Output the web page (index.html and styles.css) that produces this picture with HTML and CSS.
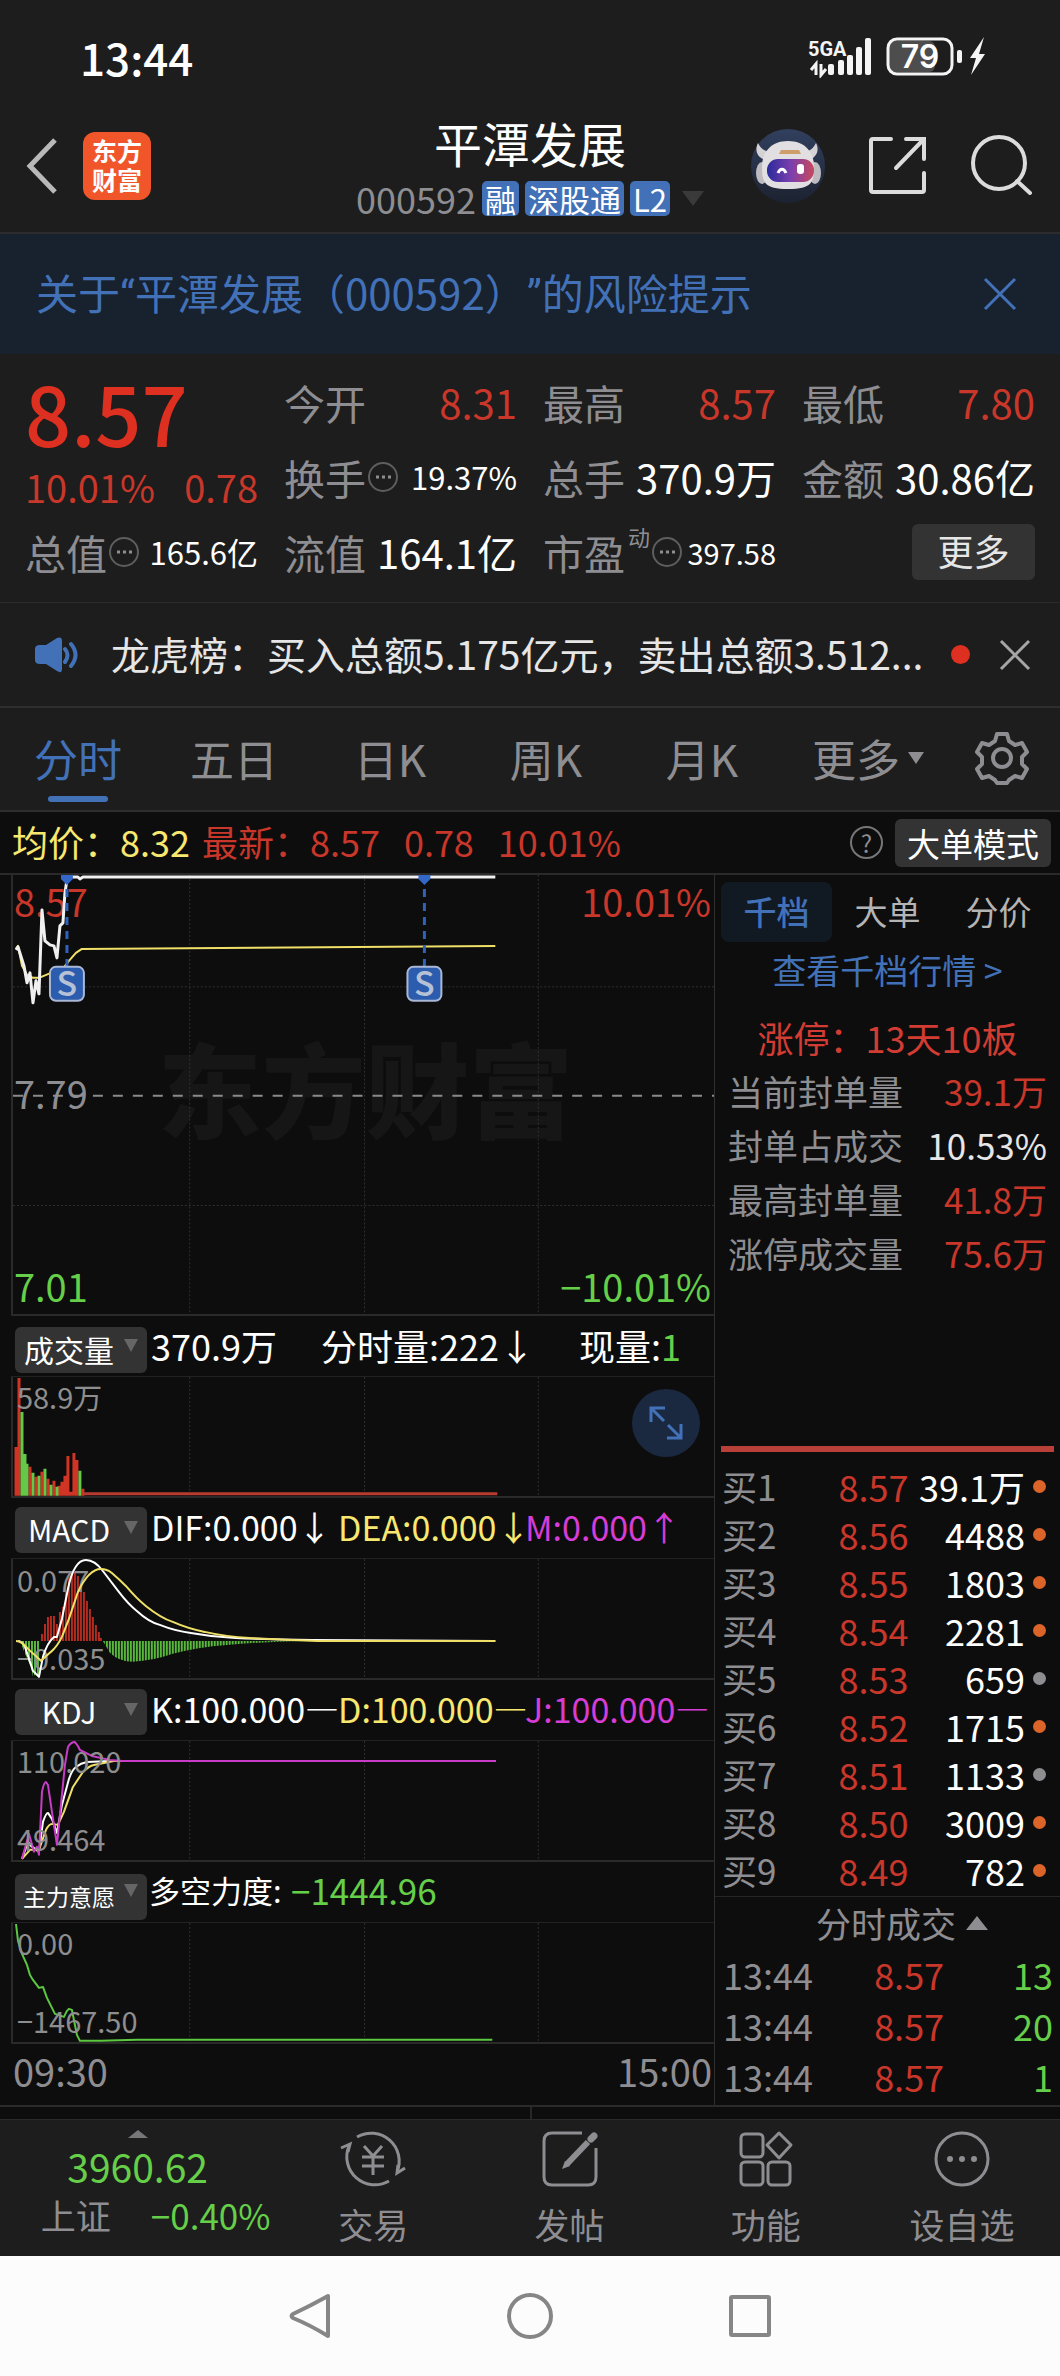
FILE: index.html
```html
<!DOCTYPE html>
<html lang="zh-CN">
<head>
    <meta charset="UTF-8">
    <meta name="viewport" content="width=device-width, initial-scale=1">
    <title>平潭发展 000592</title>
    <link rel="stylesheet" href="styles.css">
</head>
<body>
    <div class="status-bar">
        <span class="clock">13:44</span>
        <svg class="status-icons" viewBox="0 0 180 42" width="180" height="42">
            <text x="0" y="20" class="net-type">5GA</text>
            <path d="M3 34l5-6v11M13 28v11l5-6" fill="none" stroke="#f4f4f4" stroke-width="3"/>
            <g fill="#f4f4f4">
                <rect x="20" y="28" width="6" height="11" rx="2"/>
                <rect x="30" y="24" width="6" height="15" rx="2"/>
                <rect x="39" y="19" width="6" height="20" rx="2"/>
                <rect x="48" y="11" width="6" height="28" rx="2"/>
                <rect x="57" y="2" width="6" height="37" rx="2"/>
                <rect x="149" y="14" width="5" height="13" rx="2"/>
                <path d="M176 1l-14 21h6l-5 17 14-21h-6z"/>
            </g>
            <rect x="81" y="5" width="46" height="31" rx="6" fill="#4d4d4d"/>
            <rect x="80" y="3" width="64" height="35" rx="9" fill="none" stroke="#f4f4f4" stroke-width="3"/>
            <text x="112" y="32" class="battery">79</text>
        </svg>
    </div>

    <header class="header">
        <div class="header-left">
            <button class="icon-btn" aria-label="返回">
                <svg viewBox="0 0 34 58" width="34" height="58"><path d="M30 3L5 29l25 26" fill="none" stroke="#b9b9b9" stroke-width="5"/></svg>
            </button>
            <a href="#" class="logo"><span>东方</span><span>财富</span></a>
        </div>
        <div class="header-title">
            <h1>平潭发展</h1>
            <div class="code-row">
                <span class="code">000592</span>
                <span class="tag">融</span>
                <span class="tag">深股通</span>
                <span class="tag">L2</span>
                <span class="caret-down"></span>
            </div>
        </div>
        <div class="header-right">
            <button class="icon-btn" aria-label="智能助手">
                <svg viewBox="0 0 76 76" width="76" height="76">
                    <defs>
                        <linearGradient id="sky" x1="0" y1="0" x2="0" y2="1"><stop offset="0" stop-color="#31405f"/><stop offset="1" stop-color="#1c2230"/></linearGradient>
                        <linearGradient id="visor" x1="0" y1="0" x2="1" y2="0"><stop offset="0" stop-color="#2a2a9c"/><stop offset=".5" stop-color="#7a3fae"/><stop offset="1" stop-color="#c8485c"/></linearGradient>
                    </defs>
                    <circle cx="38" cy="38" r="37" fill="url(#sky)"/>
                    <path d="M8 15c-4 8 0 15 8 17l6-8c-7 0-11-3-14-9zM66 15c4 8 0 15-8 17l-6-8c7 0 11-3 14-9z" fill="#d5d2d6"/>
                    <ellipse cx="12" cy="45" rx="6" ry="11" fill="#bdbac0"/>
                    <ellipse cx="65" cy="45" rx="6" ry="11" fill="#bdbac0"/>
                    <path d="M38 13c17 0 26 11 26 26s-2 22-26 22-26-7-26-22 9-26 26-26z" fill="#e2dfe2"/>
                    <path d="M31 22h18l2 4H29z" fill="#cf9d6a"/>
                    <rect x="17" y="31" width="47" height="23" rx="11" fill="url(#visor)"/>
                    <path d="M28 45c2-5 6-5 8 0" fill="none" stroke="#fff" stroke-width="3"/>
                    <rect x="47" y="36" width="7" height="10" rx="3" fill="#fff"/>
                </svg>
            </button>
            <button class="icon-btn" aria-label="分享">
                <svg viewBox="0 0 60 60" width="60" height="60"><path d="M23 3H5Q3 3 3 5v49q0 2 2 2h49q2 0 2-2V37M38 3h18v20M56 3L28 32" fill="none" stroke="#dcdcdc" stroke-width="4" stroke-linecap="round"/></svg>
            </button>
            <button class="icon-btn" aria-label="搜索">
                <svg viewBox="0 0 62 62" width="62" height="62"><circle cx="29" cy="28" r="26" fill="none" stroke="#dcdcdc" stroke-width="4"/><path d="M47 46l13 12" stroke="#dcdcdc" stroke-width="4" stroke-linecap="round"/></svg>
            </button>
        </div>
    </header>

    <div class="notice">
        <a href="#"><span>关于</span><span class="quote-mark">“</span><span>平潭发展（000592）</span><span class="quote-mark">”</span><span>的风险提示</span></a>
        <button class="icon-btn" aria-label="关闭提示">
            <svg viewBox="0 0 34 34" width="34" height="34"><path d="M2 2l30 30M32 2L2 32" stroke="#4271b8" stroke-width="3"/></svg>
        </button>
    </div>

    <section class="quote">
        <div class="price-block">
            <div class="price">8.57</div>
            <div class="change"><span>10.01%</span><span>0.78</span></div>
        </div>
        <div class="cell"><span class="name">今开</span><span class="red">8.31</span></div>
        <div class="cell"><span class="name">最高</span><span class="red">8.57</span></div>
        <div class="cell"><span class="name">最低</span><span class="red">7.80</span></div>
        <div class="cell"><span class="name">换手<svg class="more-dot" viewBox="0 0 30 30"><use href="#dots"/></svg></span><span class="small">19.37%</span></div>
        <div class="cell"><span class="name">总手</span><span>370.9万</span></div>
        <div class="cell"><span class="name">金额</span><span>30.86亿</span></div>
        <div class="cell"><span class="name">总值<svg class="more-dot" viewBox="0 0 30 30"><use href="#dots"/></svg></span><span class="small">165.6亿</span></div>
        <div class="cell"><span class="name">流值</span><span>164.1亿</span></div>
        <div class="cell"><span class="name">市盈<sup>动</sup><svg class="more-dot" viewBox="0 0 30 30"><g id="dots"><circle cx="15" cy="15" r="14" fill="none" stroke="#5e5e5e" stroke-width="2"/><path d="M8 15h3M14 15h3M20 15h3" stroke="#8e8e92" stroke-width="3"/></g></svg></span><span class="smaller">397.58</span></div>
        <div class="cell cell-end"><button class="more-btn">更多</button></div>
    </section>

    <div class="news">
        <svg viewBox="0 0 46 38" width="46" height="38"><path d="M2 13q0-4 5-4h6L24 2q5-2 5 3v28q0 5-5 2l-11-7H7q-5 0-5-4z" fill="#4271b8"/><path d="M32 13q5 6 0 13M38 8q9 11 0 22" fill="none" stroke="#4271b8" stroke-width="4" stroke-linecap="round"/></svg>
        <a href="#">龙虎榜：买入总额5.175亿元，卖出总额3.512...</a>
        <span class="unread"></span>
        <button class="icon-btn" aria-label="关闭消息">
            <svg viewBox="0 0 32 32" width="32" height="32"><path d="M2 2l28 28M30 2L2 30" stroke="#a6a6a6" stroke-width="3"/></svg>
        </button>
    </div>

    <nav class="period-tabs">
        <button class="active">分时</button>
        <button>五日</button>
        <button>日K</button>
        <button>周K</button>
        <button>月K</button>
        <button>更多<span class="caret-down caret-small"></span></button>
        <button class="settings" aria-label="设置">
            <svg viewBox="0 0 54 54" width="54" height="54" fill="none" stroke="#8e8e92" stroke-width="4" stroke-linejoin="round"><path d="M22 3h10l2 7 6 4 7-2 5 9-5 5v7l5 5-5 9-7-2-6 4-2 3H22l-2-3-6-4-7 2-5-9 5-5v-7l-5-5 5-9 7 2 6-4z"/><circle cx="27" cy="27" r="9"/></svg>
        </button>
    </nav>

    <div class="info-row">
        <span class="yellow">均价：8.32</span>
        <span class="red latest"><span>最新：8.57</span><span>0.78</span><span>10.01%</span></span>
        <button class="help" aria-label="帮助">?</button>
        <button class="mode-btn">大单模式</button>
    </div>

    <main class="board">
        <div class="charts">
            <svg class="chart" viewBox="0 0 702 440">
                <text x="353" y="256" class="watermark">东方财富</text>
                <g class="dotted">
                    <path d="M0 112H702M0 331H702"/>
                    <path d="M177 0V440M352 0V440M526 0V440"/>
                </g>
                <path d="M0 221H702" stroke="#8a8a8a" stroke-width="2" stroke-dasharray="10 10"/>
                <text x="1" y="42" class="axis red-fill">8.57</text>
                <text x="699" y="42" class="axis red-fill end">10.01%</text>
                <text x="1" y="234" class="axis">7.79</text>
                <text x="1" y="428" class="axis green-fill">7.01</text>
                <text x="699" y="428" class="axis green-fill end">−10.01%</text>
                <path class="line yellow-line" d="M3 74L5 71L9 91L14 100L20 103L26 103L38 98L49 95L56 86L63 78L69 74L483 71"/>
                <path class="line price-line" d="M3 75L5 72L11 91L14 108L17 98L20 128L23 106L26 119L29 35L32 66L37 70L41 71L44 83L47 51L50 48L52 18L54 5L58 2H65L67 4L70 2H483"/>
                <g class="sell">
                    <path d="M48 0h12v4l-6 6-6-6zM406 0h12v4l-6 6-6-6z" fill="#3468c8"/>
                    <path d="M54 14V92M412 14V92" stroke="#2f62ba" stroke-width="3" stroke-dasharray="8 6"/>
                    <rect x="37" y="92" width="34" height="34" rx="6"/>
                    <rect x="395" y="92" width="34" height="34" rx="6"/>
                    <text x="54" y="121">S</text>
                    <text x="412" y="121">S</text>
                </g>
            </svg>

            <div class="indicator-bar volume-bar">
                <span class="picker"><select aria-label="副图指标一"><option>成交量</option></select></span>
                <span>370.9万</span>
                <span>分时量:222↓</span>
                <span>现量:<span class="green">1</span></span>
            </div>
            <div class="sub-chart">
                <svg class="chart" viewBox="0 0 702 119">
                    <path class="dotted" d="M177 0V119M352 0V119M526 0V119"/>
                    <g stroke-width="3">
                        <path stroke="#cf3424" d="M3 119V70M6 119V1M17 119V90M23 119V100M29 119V95M35 119V102M41 119V104M46 119V109M49 119V105M52 119V99M55 119V79M58 119V115M61 119V76M64 119V83M70 119V112"/>
                        <path stroke="#66c848" d="M9 119V35M12 119V77M14 119V87M20 119V96M26 119V99M32 119V92M38 119V108M44 119V110M67 119V94"/>
                    </g>
                    <path d="M70 117H485" stroke="#b83a30" stroke-width="3"/>
                    <text x="4" y="32" class="scale">58.9万</text>
                </svg>
                <button class="expand" aria-label="全屏">
                    <svg viewBox="0 0 36 36" width="36" height="36" fill="none" stroke="#4271b8" stroke-width="3"><path d="M3 17V3h14M3 3l13 13M33 19v14H19M33 33L20 20"/></svg>
                </button>
            </div>

            <div class="indicator-bar">
                <span class="picker"><select aria-label="副图指标二"><option>MACD</option></select></span>
                <span>DIF:0.000↓</span>
                <span class="yellow">DEA:0.000↓</span>
                <span class="purple">M:0.000↑</span>
            </div>
            <svg class="chart" viewBox="0 0 702 119">
                <defs>
                    <pattern id="stripes" width="3" height="119" patternUnits="userSpaceOnUse"><rect width="2" height="119" fill="#58b83c"/></pattern>
                </defs>
                <path class="dotted" d="M177 0V119M352 0V119M526 0V119"/>
                <path stroke="#b42c20" stroke-width="2" d="M29 82V75M32 82V65M35 82V58M38 82V57M41 82V57M44 82V65M47 82V53M50 82V48M53 82V33M56 82V15M59 82V13M62 82V13M65 82V17M68 82V25M71 82V33M74 82V42M77 82V50M80 82V58M83 82V66M86 82V73M88 82V79"/>
                <path fill="url(#stripes)" d="M7 82L12 95L18 108L20 118L23 115L27 117V82z"/>
                <path fill="url(#stripes)" d="M90 82L97 94Q106 103 120 103Q140 102 160 95Q185 88 214 86Q250 83 290 82z"/>
                <text x="4" y="33" class="scale">0.077</text>
                <text x="4" y="111" class="scale">−0.035</text>
                <path class="line white-line" d="M5 82Q9 82 12 88L20 112L26 118L30 98Q34 84 41 78L44 78L49 60L55 30Q61 1 73 1Q82 1 90 12L106 33Q116 46 124 52Q136 63 147 66Q162 72 178 74Q200 78 223 79Q260 81 300 81L483 82"/>
                <path class="line yellow-line" d="M3 82Q9 82 15 90L28 102L38 93Q44 88 49 78L56 60L65 33Q76 10 88 10Q94 10 99 14Q106 20 113 27Q124 40 133 47Q148 59 160 63Q176 70 192 73Q214 78 237 79Q270 81 305 82H483"/>
            </svg>

            <div class="indicator-bar">
                <span class="picker"><select aria-label="副图指标三"><option>KDJ</option></select></span>
                <span>K:100.000—</span>
                <span class="yellow">D:100.000—</span>
                <span class="purple">J:100.000—</span>
            </div>
            <svg class="chart" viewBox="0 0 702 119">
                <path class="dotted" d="M177 0V119M352 0V119M526 0V119"/>
                <path class="line white-line" d="M9 118L15 101L18 105L26 111L30 81Q33 72 35 72L39 78L44 92L49 64L56 38Q59 29 63 26Q68 22 74 21L97 20H483"/>
                <path class="line yellow-line" d="M9 118L17 109H26L33 89Q36 83 39 83L45 84L51 71L60 46L70 31Q76 25 81 24L101 20H483"/>
                <path class="line purple-line" d="M9 118L16 93L21 111L24 106L26 114L29 51Q31 41 33 41L35 44L39 71L44 104L47 74L52 24L55 6Q58 1 62 1L65 5L67 9L79 15L97 19L110 20H483"/>
                <text x="4" y="32" class="scale">110.020</text>
                <text x="4" y="110" class="scale">49.464</text>
            </svg>

            <div class="indicator-bar force-bar">
                <span class="picker"><select class="long" aria-label="副图指标四"><option>主力意愿</option></select></span>
                <span class="force">多空力度:</span>
                <span class="green">−1444.96</span>
            </div>
            <svg class="chart" viewBox="0 0 702 119">
                <path class="dotted" d="M177 0V119M352 0V119M526 0V119"/>
                <path class="line green-line" d="M3 1L5 18L9 31L14 42L17 52L20 57L26 65L30 64L34 75L42 91L51 94L54 88L56 86L59 87L64 112L67 118H88L124 117H480"/>
                <text x="4" y="32" class="scale">0.00</text>
                <text x="4" y="110" class="scale">−1467.50</text>
            </svg>
            <div class="time-axis"><span>09:30</span><span>15:00</span></div>
        </div>

        <aside class="side">
            <div class="side-tabs">
                <button class="active">千档</button>
                <button>大单</button>
                <button>分价</button>
            </div>
            <a href="#" class="depth-link">查看千档行情 &gt;</a>
            <div class="limit">
                <div class="limit-title">涨停：13天10板</div>
                <div class="limit-row"><span>当前封单量</span><span class="red">39.1万</span></div>
                <div class="limit-row"><span>封单占成交</span><span class="white">10.53%</span></div>
                <div class="limit-row"><span>最高封单量</span><span class="red">41.8万</span></div>
                <div class="limit-row"><span>涨停成交量</span><span class="red">75.6万</span></div>
            </div>
            <table class="book">
                <tr><th>买1</th><td class="red">8.57</td><td>39.1万</td><td><i class="dot"></i></td></tr>
                <tr><th>买2</th><td class="red">8.56</td><td>4488</td><td><i class="dot"></i></td></tr>
                <tr><th>买3</th><td class="red">8.55</td><td>1803</td><td><i class="dot"></i></td></tr>
                <tr><th>买4</th><td class="red">8.54</td><td>2281</td><td><i class="dot"></i></td></tr>
                <tr><th>买5</th><td class="red">8.53</td><td>659</td><td><i class="dot gray"></i></td></tr>
                <tr><th>买6</th><td class="red">8.52</td><td>1715</td><td><i class="dot"></i></td></tr>
                <tr><th>买7</th><td class="red">8.51</td><td>1133</td><td><i class="dot gray"></i></td></tr>
                <tr><th>买8</th><td class="red">8.50</td><td>3009</td><td><i class="dot"></i></td></tr>
                <tr><th>买9</th><td class="red">8.49</td><td>782</td><td><i class="dot"></i></td></tr>
            </table>
            <div class="ticks">
                <button class="ticks-title">分时成交<span class="caret-up"></span></button>
                <table>
                    <tr><th>13:44</th><td class="red">8.57</td><td class="green">13</td></tr>
                    <tr><th>13:44</th><td class="red">8.57</td><td class="green">20</td></tr>
                    <tr><th>13:44</th><td class="red">8.57</td><td class="green">1</td></tr>
                </table>
            </div>
        </aside>
    </main>

    <div class="next-section"><div></div><div></div></div>

    <footer class="toolbar">
        <a href="#" class="index">
            <span class="caret-up caret-small"></span>
            <span class="green index-value">3960.62</span>
            <span class="index-row"><span>上证</span><span class="green">−0.40%</span></span>
        </a>
        <button>
            <svg viewBox="0 0 68 60" width="68" height="60" fill="none" stroke="#8e8e92" stroke-width="3"><path d="M18 8A28 28 0 0 1 58 43M66 39l-8 5 1-8M50 52A28 28 0 0 1 10 17M2 19l9-4-2 8"/><path d="M25 17l9 10 9-10M23 28h22M23 37h22M34 27v19"/></svg>
            交易
        </button>
        <button>
            <svg viewBox="0 0 60 60" width="60" height="60" fill="none" stroke="#8e8e92" stroke-width="3"><path d="M42 4H12q-8 0-8 8v36q0 8 8 8h36q8 0 8-8V19"/><path d="M27 35l21-22" stroke-width="6"/><path d="M51 10l3-3" stroke-width="7" stroke-linecap="round"/><path d="M22 40l3-8 5 5z" fill="#8e8e92" stroke="none"/></svg>
            发帖
        </button>
        <button>
            <svg viewBox="0 0 60 60" width="60" height="60" fill="none" stroke="#8e8e92" stroke-width="3" stroke-linejoin="round"><rect x="5" y="5" width="22" height="23" rx="4"/><rect x="5" y="33" width="22" height="23" rx="4"/><rect x="32" y="33" width="22" height="23" rx="4"/><path d="M43 4l12 12-12 13-12-13z"/></svg>
            功能
        </button>
        <button>
            <svg viewBox="0 0 60 60" width="60" height="60"><circle cx="30" cy="30" r="26" fill="none" stroke="#8e8e92" stroke-width="3"/><g fill="#8e8e92"><circle cx="18" cy="30" r="3"/><circle cx="30" cy="30" r="3"/><circle cx="42" cy="30" r="3"/></g></svg>
            设自选
        </button>
    </footer>

    <nav class="system-nav">
        <button aria-label="返回"><svg viewBox="0 0 48 48" width="48" height="48"><path d="M42 4v40Q24 33 7 26q-3-2 0-4Q24 14 42 4z" fill="none" stroke="#868686" stroke-width="4" stroke-linejoin="round"/></svg></button>
        <button aria-label="主屏幕"><svg viewBox="0 0 48 48" width="48" height="48"><circle cx="24" cy="24" r="21" fill="none" stroke="#868686" stroke-width="4"/></svg></button>
        <button aria-label="最近任务"><svg viewBox="0 0 48 48" width="48" height="48"><rect x="5" y="5" width="38" height="38" rx="1" fill="none" stroke="#868686" stroke-width="4"/></svg></button>
    </nav>
</body>
</html>
```

FILE: styles.css
```css
* {
    box-sizing: border-box;
}

body {
    margin: 0;
    background-color: #0d0d0d;
    color: #fff;
    font-family: "Noto Sans CJK SC", sans-serif;
    font-size: 36px;
    line-height: 48px;
    white-space: nowrap;
}

button, select {
    border: none;
    padding: 0;
    background: none;
    color: inherit;
    font-family: inherit;
    font-size: inherit;
    line-height: inherit;
    cursor: pointer;
}

a {
    color: inherit;
    text-decoration: none;
}

svg {
    display: block;
    flex-shrink: 0;
}

table {
    width: 100%;
    border-collapse: collapse;
    table-layout: fixed;
}

th, td {
    padding: 0;
    font-weight: 400;
    text-align: right;
}

th {
    color: #8e8e92;
    text-align: left;
}

.red { color: #c8372a; }
.green { color: #66cf4a; }
.yellow { color: #f8e870; }
.purple { color: #d63cd6; }
.white { color: #e6e6e6; }

.caret-down {
    border: 11px solid transparent;
    border-top: 15px solid #3a3a3a;
    border-bottom: none;
}

.caret-up {
    border: 11px solid transparent;
    border-bottom: 14px solid #8e8e92;
    border-top: none;
}

.caret-small {
    border-width: 12px 8px;
    border-top-color: #8e8e92;
}

/* Phone status bar */
.status-bar {
    display: flex;
    justify-content: space-between;
    align-items: center;
    height: 116px;
    padding: 0 72px 3px 80px;
    background-color: #1d1d1d;
}

.clock {
    font-size: 44px;
    font-weight: 500;
}

.net-type {
    font-family: Roboto, sans-serif;
    font-size: 20px;
    font-weight: 700;
    fill: #f4f4f4;
}

.battery {
    font-family: Inter, sans-serif;
    font-size: 32px;
    font-weight: 600;
    text-anchor: middle;
    fill: #fff;
}

/* Header */
.header {
    display: grid;
    grid-template-columns: 1fr auto 1fr;
    height: 118px;
    border-bottom: 2px solid #2c2c2e;
    background-color: #1d1d1d;
}

.header-left {
    display: flex;
    align-items: center;
    gap: 24px;
    padding: 0 0 16px 25px;
}

.header-right {
    display: flex;
    align-items: center;
    justify-content: flex-end;
    gap: 42px;
    padding: 0 28px 16px 0;
}

.logo {
    display: flex;
    flex-direction: column;
    align-items: center;
    justify-content: center;
    width: 68px;
    height: 68px;
    padding-bottom: 2px;
    border-radius: 12px;
    background-color: #f0562a;
    font-size: 25px;
    font-weight: 700;
    line-height: 29px;
}

.header-title {
    display: flex;
    flex-direction: column;
    align-items: center;
}

h1 {
    margin: 0;
    font-size: 48px;
    font-weight: 400;
    line-height: 52px;
}

.code-row {
    display: flex;
    align-items: center;
    gap: 6px;
    height: 60px;
}

.code {
    color: #8e8e92;
}

.tag {
    padding: 0 3px;
    border-radius: 5px;
    background-color: #4271b8;
    font-size: 31px;
    line-height: 35px;
}

.code-row .caret-down {
    margin-left: 6px;
}

/* Risk notice */
.notice {
    display: flex;
    align-items: center;
    justify-content: space-between;
    height: 120px;
    padding: 0 43px 0 36px;
    background-color: #18212e;
    color: #4271b8;
    font-size: 42px;
    text-spacing-trim: space-all;
}

.quote-mark {
    font-family: Roboto, sans-serif;
}

/* Quote figures */
.quote {
    display: grid;
    grid-template-columns: repeat(4, minmax(0, 1fr));
    grid-template-rows: repeat(3, 75px);
    column-gap: 26px;
    padding: 10px 25px 13px;
    border-bottom: 1px solid #2a2a2a;
    background-color: #1d1d1d;
    font-size: 40px;
}

.price-block {
    grid-row: span 2;
    color: #dd3020;
}

.price {
    font-size: 81px;
    font-weight: 500;
    line-height: 96px;
}

.change {
    display: flex;
    justify-content: space-between;
    color: #c8372a;
    font-size: 38px;
    line-height: 54px;
}

.cell {
    display: flex;
    align-items: center;
    justify-content: space-between;
}

.name {
    display: flex;
    align-items: center;
    color: #8e8e92;
    font-size: 41px;
}

.name sup {
    align-self: flex-start;
    margin-left: 3px;
    font-size: 22px;
    line-height: 16px;
}

.more-dot {
    width: 30px;
    height: 30px;
    margin-left: 2px;
}

.small {
    font-size: 31px;
}

.smaller {
    font-size: 29px;
}

.cell-end {
    justify-content: flex-end;
}

.more-btn {
    width: 123px;
    height: 56px;
    padding-bottom: 3px;
    border-radius: 6px;
    background-color: #333;
    color: #e6e6e6;
    font-size: 36px;
}

/* News line */
.news {
    display: flex;
    align-items: center;
    height: 105px;
    padding: 0 29px 0 33px;
    border-bottom: 2px solid #2e2e2e;
    background-color: #1d1d1d;
    color: #e6e6e6;
    font-size: 39px;
}

.news a {
    flex: 1;
    margin-left: 32px;
    padding-bottom: 3px;
}

.unread {
    width: 19px;
    height: 19px;
    margin-right: 29px;
    border-radius: 50%;
    background-color: #dd3020;
}

/* Period tabs */
.period-tabs {
    display: grid;
    grid-template-columns: repeat(5, 156fr) 176fr 92fr;
    height: 104px;
    padding-right: 12px;
    border-bottom: 2px solid #2e2e2e;
    background-color: #1d1d1d;
    color: #8e8e92;
    font-size: 44px;
}

.period-tabs button {
    display: flex;
    align-items: center;
    justify-content: center;
    gap: 8px;
    position: relative;
    padding-bottom: 2px;
}

.period-tabs .active {
    color: #4271b8;
}

.period-tabs .active::after {
    content: "";
    position: absolute;
    bottom: 8px;
    width: 60px;
    height: 6px;
    border-radius: 3px;
    background-color: #4271b8;
}

/* Average / latest price */
.info-row {
    display: flex;
    align-items: center;
    height: 63px;
    padding: 0 9px 0 12px;
    border-bottom: 2px solid #2a2a2a;
}

.info-row > span {
    padding-bottom: 3px;
}

.latest {
    display: flex;
    flex: 1;
    gap: 24px;
    margin-left: 12px;
}

.help {
    width: 33px;
    height: 33px;
    margin-right: 12px;
    border: 2px solid #77777a;
    border-radius: 50%;
    color: #8e8e92;
    font-size: 24px;
    line-height: 28px;
}

.mode-btn {
    width: 156px;
    height: 48px;
    padding-bottom: 2px;
    border-radius: 6px;
    background-color: #333;
    font-size: 33px;
}

/* Charts */
.board {
    display: grid;
    grid-template-columns: minmax(0, 714fr) minmax(0, 346fr);
    border-bottom: 2px solid #2a2a2a;
}

.charts {
    padding-left: 11px;
}

.chart {
    width: 100%;
    border-bottom: 2px solid #2a2a2a;
    border-left: 2px solid #2a2a2a;
    overflow: visible;
}

.sub-chart {
    position: relative;
}

.dotted {
    fill: none;
    stroke: #303030;
    stroke-width: 1;
    stroke-dasharray: 2 2;
}

.line {
    fill: none;
    stroke-width: 2;
    stroke-linejoin: round;
}

.price-line { stroke: #f0f0f0; stroke-width: 3; }
.white-line { stroke: #fff; }
.yellow-line { stroke: #f0e068; }
.purple-line { stroke: #c83cc8; }
.green-line { stroke: #5cc840; }

.axis {
    font-size: 38px;
    fill: #8e8e92;
}

.red-fill { fill: #c8372a; }
.green-fill { fill: #66cf4a; }

.end {
    text-anchor: end;
}

.scale {
    font-size: 29px;
    fill: #8e8e8e;
}

.watermark {
    font-size: 104px;
    font-weight: 900;
    text-anchor: middle;
    fill: #161616;
}

.sell rect {
    fill: #2c5cae;
    stroke: #a9b8d6;
    stroke-width: 2;
}

.sell text {
    font-size: 34px;
    font-weight: 500;
    text-anchor: middle;
    fill: #b7c1d6;
}

.indicator-bar {
    display: grid;
    grid-template-columns: 140px repeat(3, 187px);
    align-items: center;
    height: 61px;
    padding-bottom: 3px;
    border-bottom: 1px solid #222;
    font-size: 34px;
}

.volume-bar {
    grid-template-columns: 140px 170px 258px 1fr;
    font-size: 36px;
}

.force-bar {
    grid-template-columns: 138px 142px 1fr;
    font-size: 35px;
}

.force {
    font-size: 31px;
}

.picker {
    position: relative;
    width: 132px;
    height: 46px;
    margin-left: 4px;
}

.picker::after {
    content: "";
    position: absolute;
    top: 17px;
    right: 9px;
    border: 7px solid transparent;
    border-top: 13px solid #666;
    border-bottom: none;
    pointer-events: none;
}

.picker select {
    width: 100%;
    height: 100%;
    padding: 0 30px 2px 6px;
    border-radius: 6px;
    background-color: #333;
    font-size: 30px;
    line-height: 44px;
    text-align: center;
    appearance: none;
}

.picker .long {
    font-size: 23px;
}

.expand {
    position: absolute;
    top: 12px;
    right: 14px;
    display: flex;
    align-items: center;
    justify-content: center;
    width: 68px;
    height: 68px;
    border-radius: 50%;
    background-color: #1b2940;
}

.time-axis {
    display: flex;
    justify-content: space-between;
    align-items: center;
    height: 60px;
    padding: 0 2px 6px;
    color: #8e8e92;
    font-size: 38px;
}

/* Order book */
.side {
    padding: 7px 6px 0;
    border-left: 1px solid #303030;
}

.side-tabs {
    display: grid;
    grid-template-columns: repeat(3, 1fr);
    height: 60px;
    color: #b4b4b4;
    font-size: 33px;
}

.side-tabs button {
    padding-bottom: 3px;
}

.side-tabs .active {
    border-radius: 8px;
    background-color: #111922;
    color: #4271b8;
    font-weight: 500;
}

.depth-link {
    display: block;
    padding-bottom: 4px;
    color: #4271b8;
    font-size: 34px;
    line-height: 56px;
    text-align: center;
}

.limit {
    height: 450px;
    padding: 8px 7px 0;
    border-bottom: 6px solid #b84038;
    color: #8e8e92;
    font-size: 35px;
    line-height: 54px;
}

.limit-title {
    color: #d23c32;
    font-size: 36px;
    text-align: center;
}

.limit-row {
    display: flex;
    justify-content: space-between;
}

.book {
    margin: 10px 0 2px 1px;
}

.book th { width: 30%; font-size: 35px; }
.book td:nth-child(2) { width: 26%; }
.book td:nth-child(3) { width: 35%; }

.dot {
    display: block;
    width: 13px;
    height: 13px;
    margin-left: 8px;
    border-radius: 50%;
    background-color: #dc6428;
}

.dot.gray {
    background-color: #8e8e92;
}

.ticks {
    margin: 0 -6px;
    padding: 0 7px 3px 8px;
    border-top: 1px solid #262626;
}

.ticks-title {
    display: flex;
    align-items: center;
    justify-content: center;
    gap: 10px;
    width: 100%;
    height: 52px;
    padding-left: 28px;
    color: #8e8e92;
    font-size: 35px;
}

.ticks table {
    line-height: 51px;
}

.ticks td:nth-child(2) {
    width: 34%;
}

/* Top of the section under the toolbar */
.next-section {
    display: grid;
    grid-template-columns: 1fr 1fr;
    height: 12px;
}

.next-section div + div {
    border-left: 2px solid #262626;
}

/* Bottom toolbar */
.toolbar {
    display: grid;
    grid-template-columns: 275fr repeat(4, 196fr);
    height: 137px;
    border-top: 1px solid #2a2a2a;
    background-color: #1d1d1d;
    color: #8e8e92;
    font-size: 35px;
}

.toolbar button {
    display: flex;
    flex-direction: column;
    align-items: center;
    gap: 11px;
    padding-top: 9px;
}

.index {
    display: flex;
    flex-direction: column;
    align-items: center;
    padding-top: 10px;
}

.index .caret-small {
    border-width: 8px 10px;
    border-bottom-color: #77777a;
}

.index-value {
    font-size: 39px;
    line-height: 56px;
}

.index-row {
    display: flex;
    gap: 40px;
    padding-left: 36px;
    line-height: 42px;
}

/* Android navigation keys */
.system-nav {
    display: flex;
    justify-content: center;
    align-items: center;
    gap: 172px;
    height: 120px;
    background-color: #fcfcfc;
}
```
